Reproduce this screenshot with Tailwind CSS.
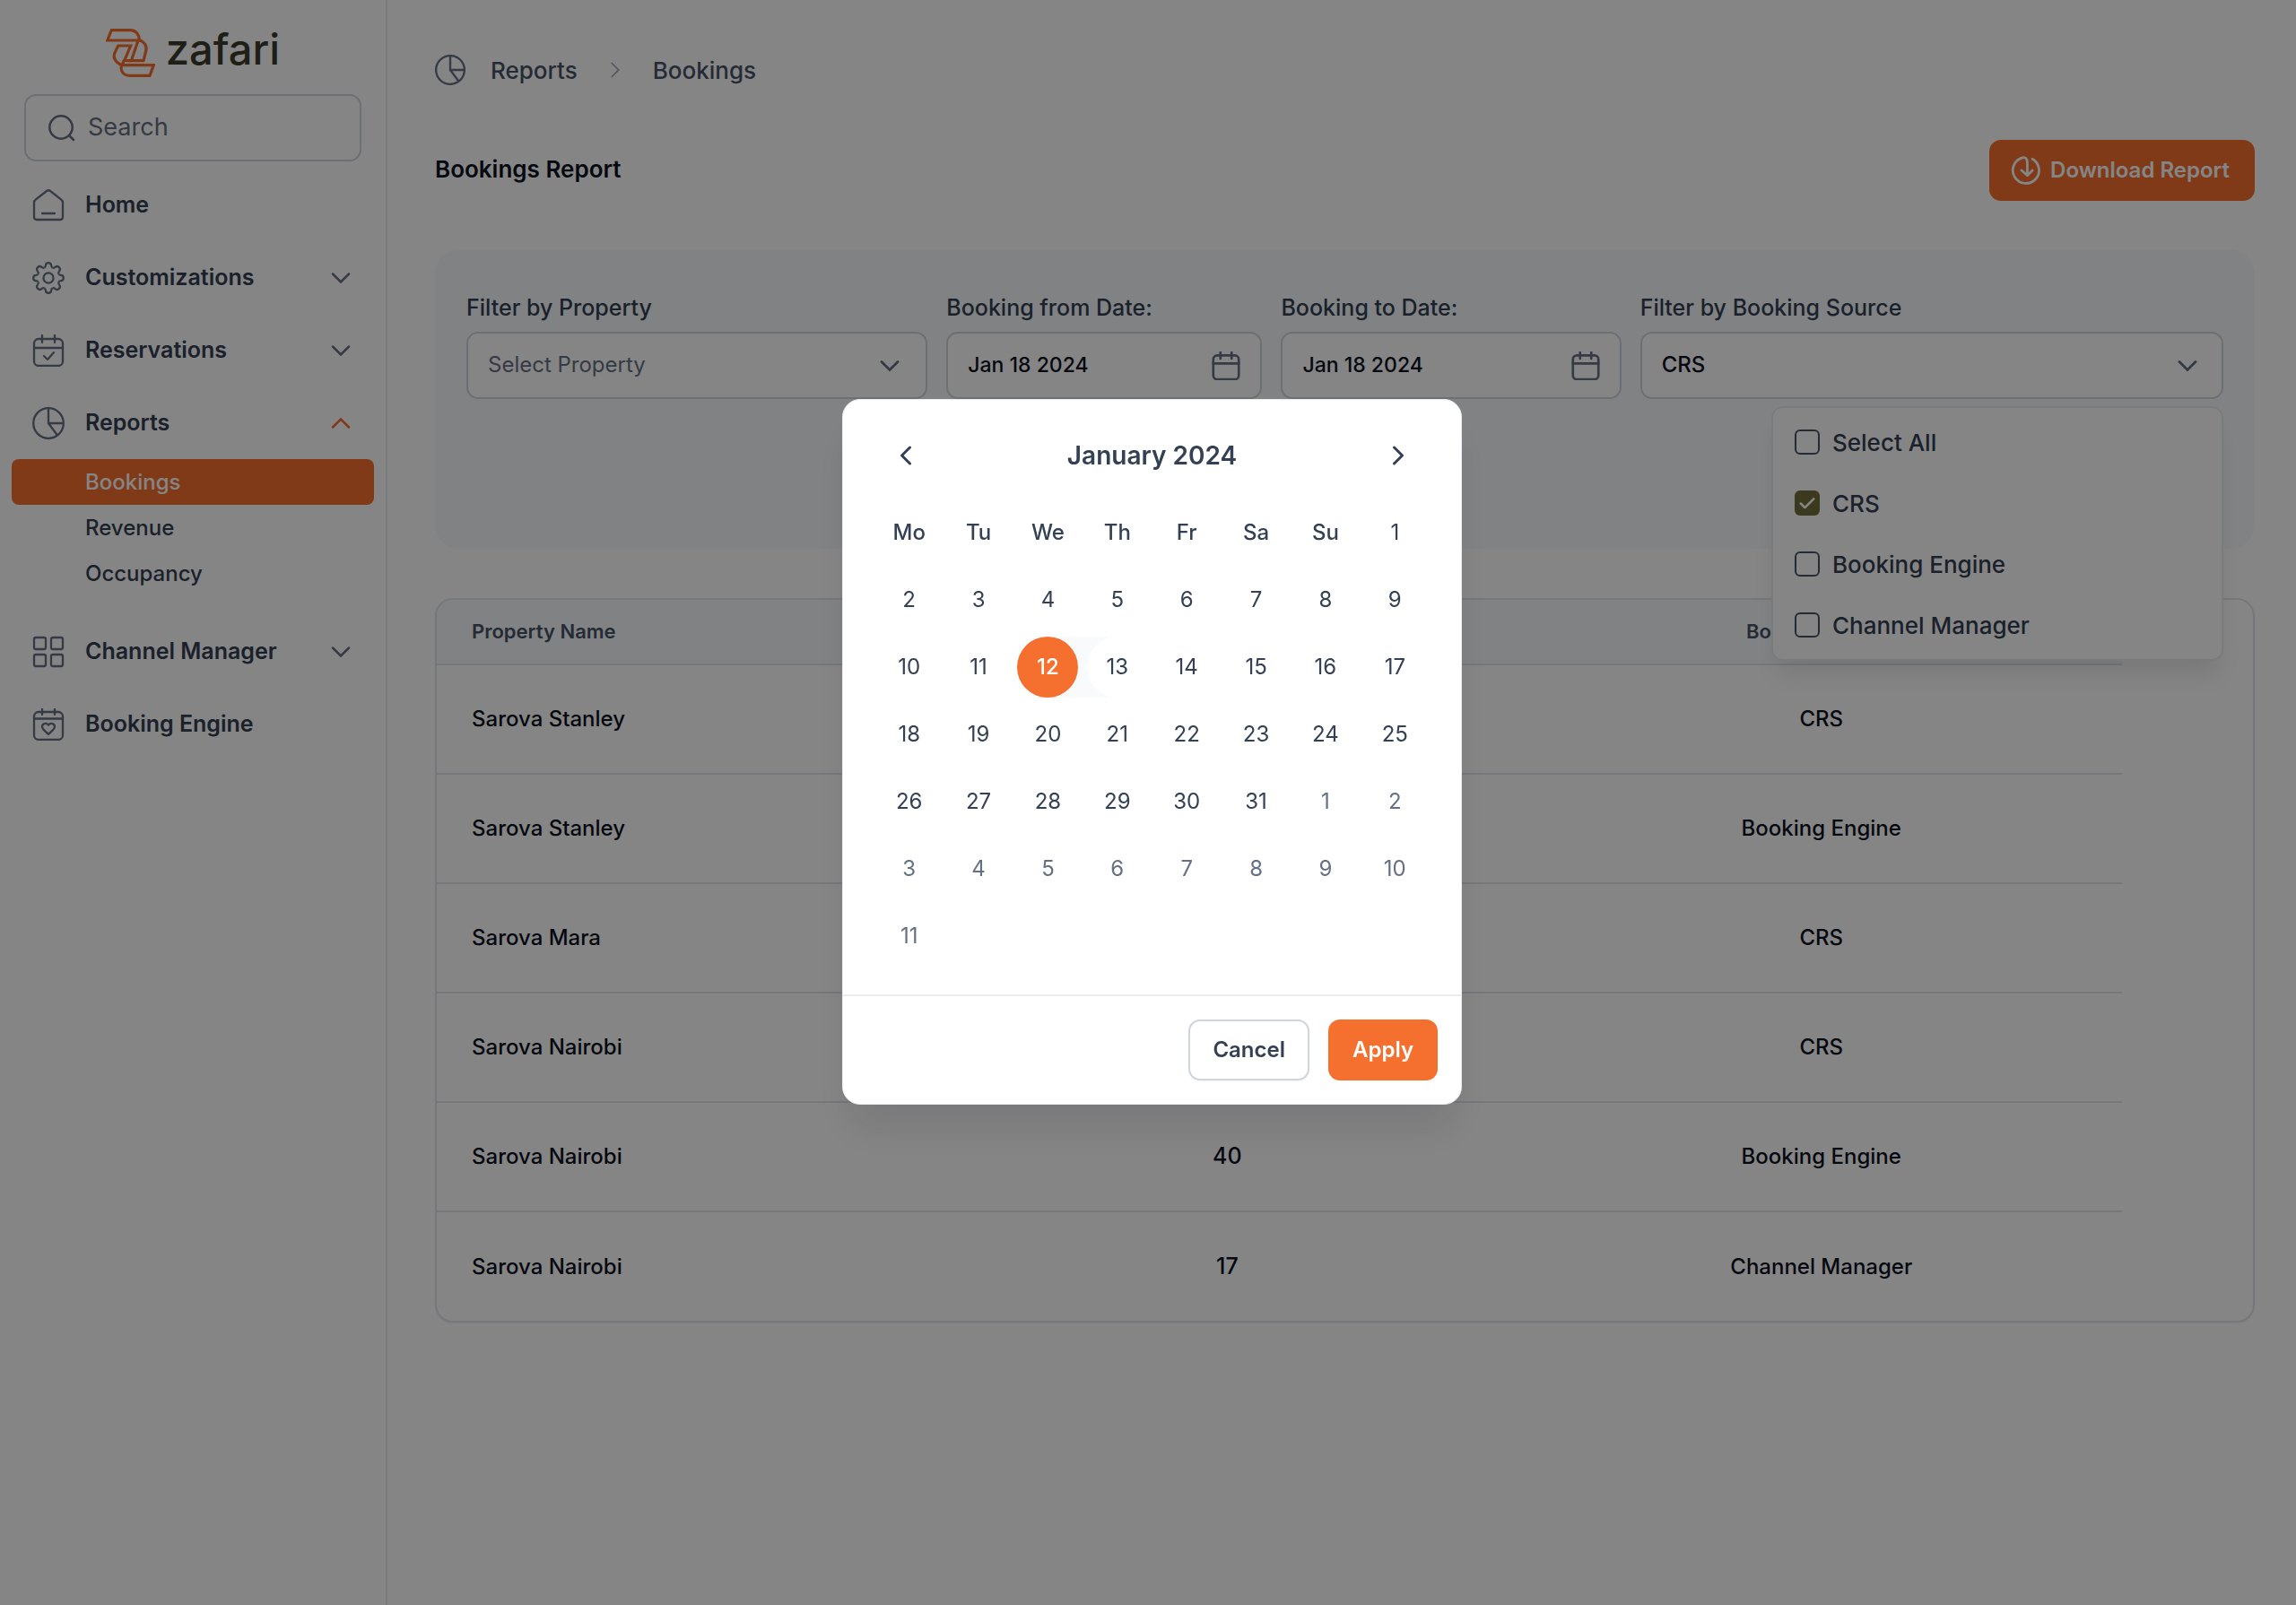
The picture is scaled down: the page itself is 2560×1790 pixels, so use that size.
<!DOCTYPE html>
<html lang="en">
<head>
    <meta charset="UTF-8">
    <meta name="viewport" content="width=device-width, initial-scale=1.0">
    <title>Bookings Report | Zafari</title>
    <script src="https://cdn.jsdelivr.net/npm/@tailwindcss/browser@4"></script>
</head>
<body class="bg-white min-h-screen font-['Inter',sans-serif] text-[#344054]">
    <!-- Icon sprite -->
    <svg class="hidden" xmlns="http://www.w3.org/2000/svg">
        <symbol id="chevron-down" viewBox="0 0 24 24"><path d="M3 7.5l9 9 9-9"/></symbol>
        <symbol id="chevron-up" viewBox="0 0 24 24"><path d="M3 16.5l9-9 9 9"/></symbol>
        <symbol id="chevron-right" viewBox="0 0 24 24"><path d="M7.5 3l9 9-9 9"/></symbol>
        <symbol id="chevron-left" viewBox="0 0 24 24"><path d="M16.5 3l-9 9 9 9"/></symbol>
        <symbol id="pie" viewBox="0 0 36 36"><circle cx="18" cy="18" r="16.8"/><path d="M18 1v17h17M18 18l10 13.5"/></symbol>
        <symbol id="calendar" viewBox="0 0 36 36"><rect x="2" y="5" width="32" height="30" rx="5"/><path d="M2 15h32M11 1v8M25 1v8"/></symbol>
    </svg>

    <div class="flex min-h-screen">
        <!-- Sidebar -->
        <aside class="w-[432px] shrink-0 border-r-2 border-[#eaecf0] pt-8">
            <a href="#" class="flex items-center justify-center gap-3 h-[54px]" aria-label="zafari">
                <svg class="w-[55px] h-[54px]" viewBox="357 97 165 162" fill="none" stroke="#f5702f" stroke-width="9.5">
                    <path d="M376 102H440C456 102 469 115 469 136H362Z"/>
                    <path d="M469 135C485 139 496 155 491 172L483 204H442L465 137"/>
                    <path d="M412 219C392 213 380 196 386 180L398 154H440L419 204H442"/>
                    <path d="M418 201L412 219H517L504 254H438C415 254 404 238 410 219"/>
                </svg>
                <span class="pb-2 text-[47px] leading-[46px] font-medium text-[#3d3c2e]">zafari</span>
            </a>
            <div class="px-[27px] mt-[19px]">
                <label class="flex items-center gap-[14px] h-[75px] px-[25px] rounded-[13px] border-2 border-[#d0d5dd]">
                    <svg class="w-[30px] h-[30px] shrink-0" viewBox="0 0 30 30" fill="none" stroke="#667085" stroke-width="2.5" stroke-linecap="round"><circle cx="14" cy="14" r="12.7"/><path d="M23.5 23.5l4.5 4.5"/></svg>
                    <input type="text" placeholder="Search" aria-label="Search" class="w-full min-w-0 text-[27px] placeholder:text-[#667085] outline-none">
                </label>
            </div>

            <nav class="px-[13px] mt-2 text-[25px] font-semibold">
                <a href="#" class="flex items-center gap-[23px] h-[81px] pl-[23px] pr-[25px]">
                    <svg class="w-9 h-9" viewBox="0 0 36 36" fill="none" stroke="#667085" stroke-width="2.3" stroke-linejoin="round" stroke-linecap="round"><path d="M2 15c0-1.6.6-2.6 2-3.6L16 2c1.3-1 2.7-1 4 0l12 9.4c1.4 1 2 2 2 3.6V31c0 2-1 3-3 3H5c-2 0-3-1-3-3ZM11 27h14"/></svg>
                    <span class="flex-1">Home</span>
                </a>
                <a href="#" class="flex items-center gap-[23px] h-[81px] pl-[23px] pr-[25px]">
                    <svg class="w-9 h-9" viewBox="-12 -12 24 24" fill="none" stroke="#667085" stroke-width="1.5">
                        <circle r="3.7"/>
                        <path id="cog" d="M-3.1-7.6C-2.4-7.9-2.2-8.5-2.1-9.3C-2-10.7-1.2-11.2 0-11.2S2-10.7 2.1-9.3C2.2-8.5 2.4-7.9 3.1-7.6"/>
                        <use href="#cog" transform="rotate(45)"/><use href="#cog" transform="rotate(90)"/><use href="#cog" transform="rotate(135)"/><use href="#cog" transform="rotate(180)"/><use href="#cog" transform="rotate(225)"/><use href="#cog" transform="rotate(270)"/><use href="#cog" transform="rotate(315)"/>
                    </svg>
                    <span class="flex-1">Customizations</span>
                    <svg class="w-6 h-6" fill="none" stroke="#667085" stroke-width="2.5" stroke-linecap="round"><use href="#chevron-down"/></svg>
                </a>
                <a href="#" class="flex items-center gap-[23px] h-[81px] pl-[23px] pr-[25px]">
                    <svg class="w-9 h-9" viewBox="0 0 36 36" fill="none" stroke="#667085" stroke-width="2.3" stroke-linejoin="round" stroke-linecap="round"><use href="#calendar"/><path d="M13 24l4 4 7-8"/></svg>
                    <span class="flex-1">Reservations</span>
                    <svg class="w-6 h-6" fill="none" stroke="#667085" stroke-width="2.5" stroke-linecap="round"><use href="#chevron-down"/></svg>
                </a>
                <a href="#" class="flex items-center gap-[23px] h-[81px] pl-[23px] pr-[25px]">
                    <svg class="w-9 h-9" fill="none" stroke="#667085" stroke-width="2.3"><use href="#pie"/></svg>
                    <span class="flex-1">Reports</span>
                    <svg class="w-6 h-6" fill="none" stroke="#f5702f" stroke-width="2.5" stroke-linecap="round"><use href="#chevron-up"/></svg>
                </a>
                <div class="flex flex-col mb-[21px] text-[24px] font-medium">
                    <a href="#" class="flex items-center h-[51px] pl-[82px] rounded-lg bg-[#f5702f] text-white">Bookings</a>
                    <a href="#" class="flex items-center h-[51px] pl-[82px]">Revenue</a>
                    <a href="#" class="flex items-center h-[51px] pl-[82px]">Occupancy</a>
                </div>
                <a href="#" class="flex items-center gap-[23px] h-[81px] pl-[23px] pr-[25px]">
                    <svg class="w-9 h-9" viewBox="0 0 36 36" fill="none" stroke="#667085" stroke-width="2.3"><rect x="2" y="2" width="13" height="13" rx="2"/><rect x="21" y="2" width="13" height="13" rx="2"/><rect x="2" y="21" width="13" height="13" rx="2"/><rect x="21" y="21" width="13" height="13" rx="2"/></svg>
                    <span class="flex-1">Channel Manager</span>
                    <svg class="w-6 h-6" fill="none" stroke="#667085" stroke-width="2.5" stroke-linecap="round"><use href="#chevron-down"/></svg>
                </a>
                <a href="#" class="flex items-center gap-[23px] h-[81px] pl-[23px] pr-[25px]">
                    <svg class="w-9 h-9" viewBox="0 0 36 36" fill="none" stroke="#667085" stroke-width="2.3" stroke-linejoin="round" stroke-linecap="round"><rect x="2" y="4" width="32" height="31" rx="5"/><path d="M2 11.5h32M11 1v6M25 1v6M18 18.5c-2-2.5-7-2-7 2 0 3 4 5 7 8.5 3-3.5 7-5.5 7-8.5 0-4-5-4.5-7-2Z"/></svg>
                    <span class="flex-1">Booking Engine</span>
                </a>
            </nav>
        </aside>

        <!-- Main Content -->
        <main class="flex-1 min-w-0 pl-[53px] pr-[46px] pt-[58px]">
            <nav class="flex items-center h-10 text-[26px] font-medium text-[#475467]">
                <svg class="w-[34px] h-[34px]" fill="none" stroke="#667085" stroke-width="2.5"><use href="#pie"/></svg>
                <a href="#" class="ml-7">Reports</a>
                <svg class="w-5 h-5 mx-8" fill="none" stroke="#98a2b3" stroke-width="2" stroke-linecap="round"><use href="#chevron-right"/></svg>
                <a href="#">Bookings</a>
            </nav>

            <div class="flex items-center justify-between mt-[58px]">
                <h1 class="pb-1 text-[26px] font-semibold text-[#0c111d]">Bookings Report</h1>
                <button class="flex items-center gap-[10px] h-[68px] pl-6 pr-7 rounded-[13px] bg-[#f5702f] text-white text-[24px] font-semibold">
                    <svg class="w-[34px] h-[34px]" viewBox="0 0 24 24" fill="none" stroke="currentColor" stroke-width="2" stroke-linecap="round" stroke-linejoin="round"><path d="M13 15.5V6C13 2.5 11 1.3 8.6 2.2A10.3 10.3 0 1 0 17 3M8.500 12l4.500 4 4-4"/></svg>
                    Download Report
                </button>
            </div>

            <!-- Filters -->
            <section class="mt-[54px] min-h-[334px] rounded-[27px] bg-[#f8fafc] px-[35px] pt-[46px]">
                <div class="grid grid-cols-[514fr_352fr_379fr_650fr] gap-[21px] text-[23px] font-medium">
                    <div class="relative">
                        <label for="property" class="block h-[46px] leading-[38px] text-[25px]">Filter by Property</label>
                        <select id="property" class="w-full h-[75px] px-[22px] pb-[2px] rounded-[13px] border-2 border-[#d0d5dd] bg-white appearance-none text-[24px] font-normal text-[#667085]">
                            <option>Select Property</option>
                        </select>
                        <svg class="absolute right-[30px] bottom-[25px] w-6 h-6 pointer-events-none" fill="none" stroke="#667085" stroke-width="3" stroke-linecap="round"><use href="#chevron-down"/></svg>
                    </div>
                    <div class="relative">
                        <label for="from" class="block h-[46px] leading-[38px] text-[25px]">Booking from Date:</label>
                        <input id="from" type="text" value="Jan 18 2024" class="w-full h-[75px] px-[22px] pb-[2px] rounded-[13px] border-2 border-[#d0d5dd] bg-white text-[#0c111d]">
                        <svg class="absolute right-6 bottom-[21px] w-8 h-8 pointer-events-none" fill="none" stroke="#667085" stroke-width="3" stroke-linecap="round"><use href="#calendar"/></svg>
                    </div>
                    <div class="relative">
                        <label for="to" class="block h-[46px] leading-[38px] text-[25px]">Booking to Date:</label>
                        <input id="to" type="text" value="Jan 18 2024" class="w-full h-[75px] px-[22px] pb-[2px] rounded-[13px] border-2 border-[#d0d5dd] bg-white text-[#0c111d]">
                        <svg class="absolute right-6 bottom-[21px] w-8 h-8 pointer-events-none" fill="none" stroke="#667085" stroke-width="3" stroke-linecap="round"><use href="#calendar"/></svg>
                    </div>
                    <div class="relative">
                        <label for="source" class="block h-[46px] leading-[38px] text-[25px]">Filter by Booking Source</label>
                        <select id="source" class="w-full h-[75px] px-[22px] pb-[2px] rounded-[13px] border-2 border-[#d0d5dd] bg-white appearance-none text-[24px] text-[#0c111d]">
                            <option>CRS</option>
                        </select>
                        <svg class="absolute right-7 bottom-[25px] w-6 h-6 pointer-events-none" fill="none" stroke="#667085" stroke-width="3" stroke-linecap="round"><use href="#chevron-down"/></svg>

                        <!-- Source options -->
                        <div class="absolute z-10 right-0 top-full mt-2 w-[504px] py-1 px-6 rounded-[13px] border-2 border-[#eaecf0] bg-white shadow-[0_20px_27px_-6px_rgba(16,24,40,0.1)] text-[26px]">
                            <label class="flex items-center gap-[14px] h-[68px]">
                                <input type="checkbox" class="appearance-none w-7 h-7 rounded-md border-2 border-[#475467]">
                                Select All
                            </label>
                            <label class="flex items-center gap-[14px] h-[68px]">
                                <span class="relative w-7 h-7">
                                    <input type="checkbox" checked class="block appearance-none w-7 h-7 rounded-md bg-[#74703a]">
                                    <svg class="absolute inset-0 w-7 h-7" viewBox="0 0 27 27" fill="none" stroke="#fff" stroke-width="2.5" stroke-linecap="round" stroke-linejoin="round"><path d="M6.5 14l4.5 4.5L20.5 9"/></svg>
                                </span>
                                CRS
                            </label>
                            <label class="flex items-center gap-[14px] h-[68px]">
                                <input type="checkbox" class="appearance-none w-7 h-7 rounded-md border-2 border-[#475467]">
                                Booking Engine
                            </label>
                            <label class="flex items-center gap-[14px] h-[68px]">
                                <input type="checkbox" class="appearance-none w-7 h-7 rounded-md border-2 border-[#475467]">
                                Channel Manager
                            </label>
                        </div>
                    </div>
                </div>
            </section>

            <!-- Bookings table -->
            <section class="mt-[55px] rounded-[20px] border-2 border-[#e1e4ec] overflow-hidden shadow-xs">
                <table class="w-[92.8%] table-fixed border-collapse text-center text-[24px] text-[#0c111d]">
                    <colgroup><col class="w-[29.5%]"><col class="w-[34.8%]"><col class="w-[35.7%]"></colgroup>
                    <thead>
                        <tr class="h-[72px] bg-[#f8fafc] border-b-2 border-[#e1e4ec] text-[22px] text-[#475467]">
                            <th scope="col" class="pl-[39px] text-left font-semibold">Property Name</th>
                            <th scope="col" class="font-semibold">Bookings</th>
                            <th scope="col" class="font-semibold">Booking Source</th>
                        </tr>
                    </thead>
                    <tbody class="divide-y-2 divide-[#e1e4ec] font-medium">
                        <tr class="h-[122px]"><td class="pl-[39px] text-left">Sarova Stanley</td><td></td><td>CRS</td></tr>
                        <tr class="h-[122px]"><td class="pl-[39px] text-left">Sarova Stanley</td><td></td><td>Booking Engine</td></tr>
                        <tr class="h-[122px]"><td class="pl-[39px] text-left">Sarova Mara</td><td></td><td>CRS</td></tr>
                        <tr class="h-[122px]"><td class="pl-[39px] text-left">Sarova Nairobi</td><td></td><td>CRS</td></tr>
                        <tr class="h-[122px]"><td class="pl-[39px] text-left">Sarova Nairobi</td><td class="text-[25px]">40</td><td>Booking Engine</td></tr>
                        <tr class="h-[122px]"><td class="pl-[39px] text-left">Sarova Nairobi</td><td class="text-[25px]">17</td><td>Channel Manager</td></tr>
                    </tbody>
                </table>
            </section>
        </main>
    </div>

    <!-- Date picker modal -->
    <div class="fixed inset-0 z-20 flex items-start justify-center bg-black/48 pt-[445px] pl-[9px]">
        <div role="dialog" aria-label="Choose date" class="w-[691px] rounded-[20px] border border-[#eaecf0] bg-white shadow-[0_34px_41px_-7px_rgba(16,24,40,0.1)]">
            <div class="px-[35px] pt-[34px] pb-[31px]">
                <div class="flex items-center justify-between h-14 px-[23px] mb-6">
                    <button aria-label="Previous month"><svg class="w-6 h-6" fill="none" stroke="#344054" stroke-width="3" stroke-linecap="round" stroke-linejoin="round"><use href="#chevron-left"/></svg></button>
                    <h2 class="text-[28px] font-semibold">January 2024</h2>
                    <button aria-label="Next month"><svg class="w-6 h-6" fill="none" stroke="#344054" stroke-width="3" stroke-linecap="round" stroke-linejoin="round"><use href="#chevron-right"/></svg></button>
                </div>
                <div class="grid grid-cols-8 auto-rows-[68px] gap-y-[7px] items-center text-center text-[24px]">
                    <span class="font-medium">Mo</span><span class="font-medium">Tu</span><span class="font-medium">We</span><span class="font-medium">Th</span><span class="font-medium">Fr</span><span class="font-medium">Sa</span><span class="font-medium">Su</span><button>1</button>
                    <button>2</button><button>3</button><button>4</button><button>5</button><button>6</button><button>7</button><button>8</button><button>9</button>
                    <button>10</button><button>11</button>
                    <button class="h-[68px] bg-linear-to-r from-white from-50% to-[#f9fafb] to-50%"><span class="flex items-center justify-center w-[68px] h-[68px] mx-auto rounded-full bg-[#f5702f] text-white font-medium">12</span></button>
                    <button class="h-[68px] bg-linear-to-r from-[#f9fafb] from-35% to-white to-35%"><span class="flex items-center justify-center w-[68px] h-[68px] mx-auto rounded-full bg-white">13</span></button>
                    <button>14</button><button>15</button><button>16</button><button>17</button>
                    <button>18</button><button>19</button><button>20</button><button>21</button><button>22</button><button>23</button><button>24</button><button>25</button>
                    <button>26</button><button>27</button><button>28</button><button>29</button><button>30</button><button>31</button><button class="text-[#667085]">1</button><button class="text-[#667085]">2</button>
                    <button class="text-[#667085]">3</button><button class="text-[#667085]">4</button><button class="text-[#667085]">5</button><button class="text-[#667085]">6</button><button class="text-[#667085]">7</button><button class="text-[#667085]">8</button><button class="text-[#667085]">9</button><button class="text-[#667085]">10</button>
                    <button class="text-[#667085]">11</button>
                </div>
            </div>
            <div class="flex justify-end gap-[21px] p-[26px] border-t-2 border-[#eaecf0] text-[24px] font-semibold">
                <button class="h-[68px] px-[25px] rounded-[13px] border-2 border-[#d0d5dd] bg-white shadow-xs">Cancel</button>
                <button class="h-[68px] px-[27px] rounded-[13px] bg-[#f5702f] text-white">Apply</button>
            </div>
        </div>
    </div>
</body>
</html>
